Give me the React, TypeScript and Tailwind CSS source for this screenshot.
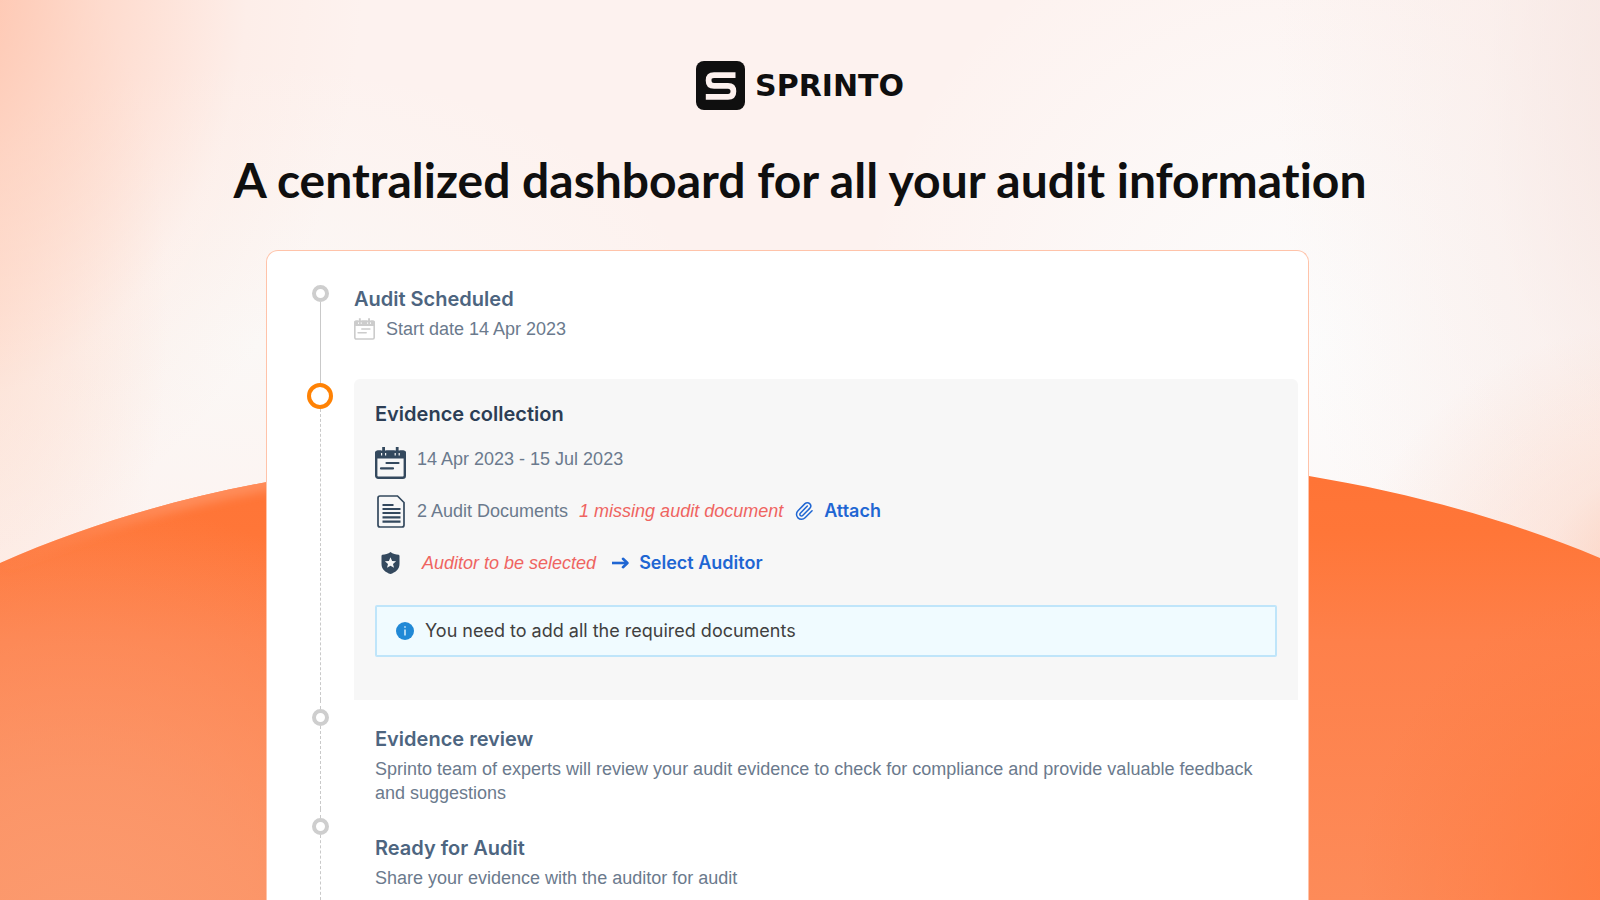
import type { ReactNode } from 'react';
import { Paperclip } from 'lucide-react';
import clsx from 'clsx';

function Logo() {
  return (
    <div className="flex items-center justify-center gap-[10px] text-[#0f0f0f]">
      <svg viewBox="0 0 49 49" className="h-[49px] w-[49px]" fill="none" aria-hidden="true">
        <rect width="49" height="49" rx="8" fill="#0f0f0f" />
        <path
          d="M39.5 14.2H18C14 14.2 12.6 16 12.6 19.4S14 24.8 18 24.8H32C36 24.8 37.4 26.8 37.4 30.3S36 35.9 32 35.9H9.8"
          stroke="#fdf1ee"
          strokeWidth="5.8"
        />
      </svg>
      <span className="font-['DejaVu_Sans',sans-serif] text-[30px] leading-8 font-bold">SPRINTO</span>
    </div>
  );
}

function CalendarIcon({ className }: { className?: string }) {
  return (
    <svg viewBox="0 0 31 32" className={className} fill="none" stroke="currentColor" aria-hidden="true">
      <rect x="1.2" y="4.7" width="28.6" height="26" rx="2" strokeWidth="2.4" />
      <path
        d="M2.5 3.5H6V8.6H11.2V3.5H19.6V8.6H24.8V3.5H28.5Q31 3.5 31 6V11.5H0V6Q0 3.5 2.5 3.5Z"
        fill="currentColor"
        stroke="none"
      />
      <path d="M8.6 0V9M22.2 0V9" strokeWidth="2.8" />
      <path d="M11.5 16H23.5M6 21.4H18" strokeWidth="2.2" strokeLinecap="round" />
    </svg>
  );
}

function DocumentIcon() {
  return (
    <svg viewBox="0 0 28 33" className="h-[33px] w-7" fill="none" stroke="currentColor" aria-hidden="true">
      <path d="M3 1H20.5L27 7.5V30Q27 32 25 32H3Q1 32 1 30V3Q1 1 3 1Z" strokeWidth="1.7" />
      <path d="M5.5 10H16.5M5.5 14H23.5M5.5 18H23.5M5.5 22.4H23.5M5.5 26.6H23.5" strokeWidth="2.1" />
    </svg>
  );
}

function ShieldIcon() {
  return (
    <svg viewBox="0 0 18 22" className="h-[22px] w-[19px]" aria-hidden="true">
      <path
        d="M9 0C11.3 1.9 14.4 2.6 17.2 2.8Q18 3 18 4V12C18 17.4 13.6 20.6 9 22C4.4 20.6 0 17.4 0 12V4Q0 3 .8 2.8C3.6 2.6 6.7 1.9 9 0Z"
        fill="currentColor"
      />
      <path
        d="M9 5.2L10.6 9 14.6 9.3 11.5 11.9 12.5 15.8 9 13.7 5.5 15.8 6.5 11.9 3.4 9.3 7.4 9Z"
        fill="#f7f7f7"
      />
    </svg>
  );
}

function ArrowIcon() {
  return (
    <svg viewBox="0 0 17 12" className="h-3 w-[17px]" fill="none" stroke="currentColor" strokeWidth="2.6" aria-hidden="true">
      <path d="M0 6H14" />
      <path d="M11 1.8L15.4 6 11 10.2" strokeLinejoin="round" strokeLinecap="round" />
    </svg>
  );
}

function InfoIcon() {
  return (
    <svg viewBox="0 0 18 18" className="h-[18px] w-[18px] shrink-0" aria-hidden="true">
      <circle cx="9" cy="9" r="9" fill="#2189d6" />
      <path d="M9 7.4V13.4M9 4.2V5.8" stroke="#d8eefb" strokeWidth="1.5" />
    </svg>
  );
}

type StepProps = {
  children: ReactNode;
  active?: boolean;
  first?: boolean;
  last?: boolean;
};

function Step({ children, active, first, last }: StepProps) {
  return (
    <li className={clsx('flex gap-[21px]', last && 'flex-1')}>
      <div className="flex w-[26px] shrink-0 flex-col items-center">
        <span
          className={clsx(
            'border-l',
            active ? 'h-1' : 'h-[9px] border-dashed',
            first ? 'border-transparent' : 'border-[#c9c9c9]',
          )}
        />
        <span
          className={clsx(
            'shrink-0 rounded-full border-4 bg-white',
            active ? 'h-[26px] w-[26px] border-[#ff8204]' : 'h-[17px] w-[17px] border-[#cecece]',
          )}
        />
        <span className={clsx('flex-1 border-l border-[#c9c9c9]', !first && 'border-dashed')} />
      </div>
      {children}
    </li>
  );
}

const headingClass = 'text-xl leading-6 font-semibold';
const bodyClass = "font-['Liberation_Sans',Arial,sans-serif] text-lg leading-6 text-[#6b7a8d]";
const warningClass = "font-['Liberation_Sans',Arial,sans-serif] text-lg leading-6 text-[#ef6461] italic";
const actionClass = 'flex cursor-pointer items-center gap-[10px] text-lg leading-6 font-semibold text-[#1f66d3]';

const upcoming = [
  {
    title: 'Evidence review',
    text: 'Sprinto team of experts will review your audit evidence to check for compliance and provide valuable feedback and suggestions',
  },
  { title: 'Ready for Audit', text: 'Share your evidence with the auditor for audit' },
];

function Backdrop() {
  return (
    <svg
      viewBox="0 0 1600 900"
      preserveAspectRatio="none"
      className="absolute inset-0 -z-10 h-full w-full"
      aria-hidden="true"
    >
      <defs>
        <linearGradient id="hill" x1="0" y1="430" x2="0" y2="900" gradientUnits="userSpaceOnUse">
          <stop offset="0.1" stopColor="#ff7436" />
          <stop offset="0.22" stopColor="#ff7638" />
          <stop offset="0.45" stopColor="#fe804a" />
          <stop offset="1" stopColor="#fd8b59" />
        </linearGradient>
        <radialGradient id="hillLeft" cx="80" cy="960" r="460" gradientUnits="userSpaceOnUse">
          <stop offset="0" stopColor="#fb9b70" />
          <stop offset="0.4" stopColor="#fb9b70" stopOpacity="0.7" />
          <stop offset="1" stopColor="#fb9b70" stopOpacity="0" />
        </radialGradient>
        <radialGradient id="hillRight" cx="1660" cy="880" r="300" gradientUnits="userSpaceOnUse">
          <stop offset="0" stopColor="#ff7a3f" />
          <stop offset="1" stopColor="#ff7a3f" stopOpacity="0" />
        </radialGradient>
        <linearGradient id="rim" x1="0" y1="0" x2="300" y2="0" gradientUnits="userSpaceOnUse">
          <stop offset="0" stopColor="#ff9263" stopOpacity="0" />
          <stop offset="0.6" stopColor="#ff9263" stopOpacity="0.8" />
          <stop offset="1" stopColor="#ff9263" stopOpacity="0.8" />
        </linearGradient>
        <filter id="soften" x="-10%" y="-50%" width="120%" height="200%">
          <feGaussianBlur stdDeviation="5" />
        </filter>
        <clipPath id="hillClip">
          <path d="M0 563C83 526 175 499 267 482C600 405 1000 410 1309 476C1410 493 1510 520 1600 558V900H0Z" />
        </clipPath>
      </defs>
      <g clipPath="url(#hillClip)">
        <rect width="1600" height="900" fill="url(#hill)" />
        <rect width="1600" height="900" fill="url(#hillLeft)" />
        <rect width="1600" height="900" fill="url(#hillRight)" />
        <path
          d="M0 563C83 526 175 499 267 482L300 475"
          fill="none"
          stroke="url(#rim)"
          strokeWidth="18"
          filter="url(#soften)"
        />
      </g>
    </svg>
  );
}

export default function App() {
  return (
    <main className="relative isolate flex h-screen flex-col overflow-hidden bg-[#fdf2ef] bg-[radial-gradient(ellipse_460px_600px_at_-6%_-4%,#ffbba1_0%,rgba(255,200,178,0.6)_40%,rgba(255,222,209,0.2)_75%,rgba(255,226,214,0)_100%),radial-gradient(ellipse_200px_420px_at_-2%_35%,#fde3d7_0%,rgba(253,229,218,0)_100%),radial-gradient(ellipse_340px_260px_at_106%_64%,#fcc8b2_0%,rgba(253,212,194,0.4)_45%,rgba(253,220,206,0)_100%),radial-gradient(ellipse_420px_800px_at_106%_8%,#f5e4e0_0%,rgba(247,232,228,0.4)_50%,rgba(247,234,230,0)_100%),radial-gradient(ellipse_460px_460px_at_82%_38%,#fcfcfc_0%,rgba(252,251,251,0.6)_50%,rgba(252,251,251,0)_100%),radial-gradient(ellipse_460px_280px_at_16%_38%,#fbf8f6_0%,rgba(251,248,246,0)_100%)] pt-[61px] font-[Inter,sans-serif]">
      <Backdrop />
      <Logo />
      <h1 className="mt-[42px] text-center font-[Lato,sans-serif] text-5xl leading-14 font-bold text-[#0f0f0f] [font-variant-ligatures:none]">
        A centralized dashboard for all your audit information
      </h1>

      <section className="mt-[42px] mr-[291px] ml-[266px] flex flex-1 flex-col rounded-t-xl border border-b-0 border-[#ffc3a9] bg-white pt-[25px] pr-[10px] pl-10">
        <ol className="flex flex-1 flex-col">
          <Step first>
            <div className="flex-1 pt-[11px] pb-[38px]">
              <h2 className={`${headingClass} text-[#4d6580]`}>Audit Scheduled</h2>
              <p className={`${bodyClass} mt-[6px] flex items-center gap-[11px]`}>
                <CalendarIcon className="h-[22px] w-[21px] text-[#cccccc]" />
                Start date 14 Apr 2023
              </p>
            </div>
          </Step>

          <Step active>
            <div className="flex-1 rounded-t-md bg-[#f7f7f7] px-[21px] pt-[23px] pb-[43px]">
              <h2 className={`${headingClass} text-[#2c3e55]`}>Evidence collection</h2>
              <div className="mt-[21px] flex h-8 items-start gap-[11px]">
                <CalendarIcon className="h-8 w-[31px] text-[#34495e]" />
                <span className={bodyClass}>14 Apr 2023 - 15 Jul 2023</span>
              </div>
              <div className="mt-4 flex h-8 items-center gap-[11px]">
                <span className="flex w-[31px] justify-center text-[#34495e]">
                  <DocumentIcon />
                </span>
                <span className={bodyClass}>2 Audit Documents</span>
                <span className={warningClass}>1 missing audit document</span>
                <button type="button" className={actionClass}>
                  <Paperclip className="h-5 w-5" strokeWidth={1.8} />
                  Attach
                </button>
              </div>
              <div className="mt-5 flex h-8 items-center gap-4">
                <span className="flex w-[31px] justify-center text-[#34495e]">
                  <ShieldIcon />
                </span>
                <span className={warningClass}>Auditor to be selected</span>
                <button type="button" className={actionClass}>
                  <ArrowIcon />
                  Select Auditor
                </button>
              </div>
              <div
                role="status"
                className="mt-[26px] flex h-[52px] items-center gap-[11px] rounded-xs border-2 border-[#bfe5fa] bg-[#f0fbff] px-[19px] text-lg text-[#404040]"
              >
                <InfoIcon />
                You need to add all the required documents
              </div>
            </div>
          </Step>

          {upcoming.map((step, i) => (
            <Step key={step.title} last={i === upcoming.length - 1}>
              <div className="flex-1 pt-[27px] pr-5 pb-1 pl-[21px]">
                <h2 className={`${headingClass} text-[#4d6580]`}>{step.title}</h2>
                <p className={`${bodyClass} mt-[6px]`}>{step.text}</p>
              </div>
            </Step>
          ))}
        </ol>
      </section>
    </main>
  );
}
